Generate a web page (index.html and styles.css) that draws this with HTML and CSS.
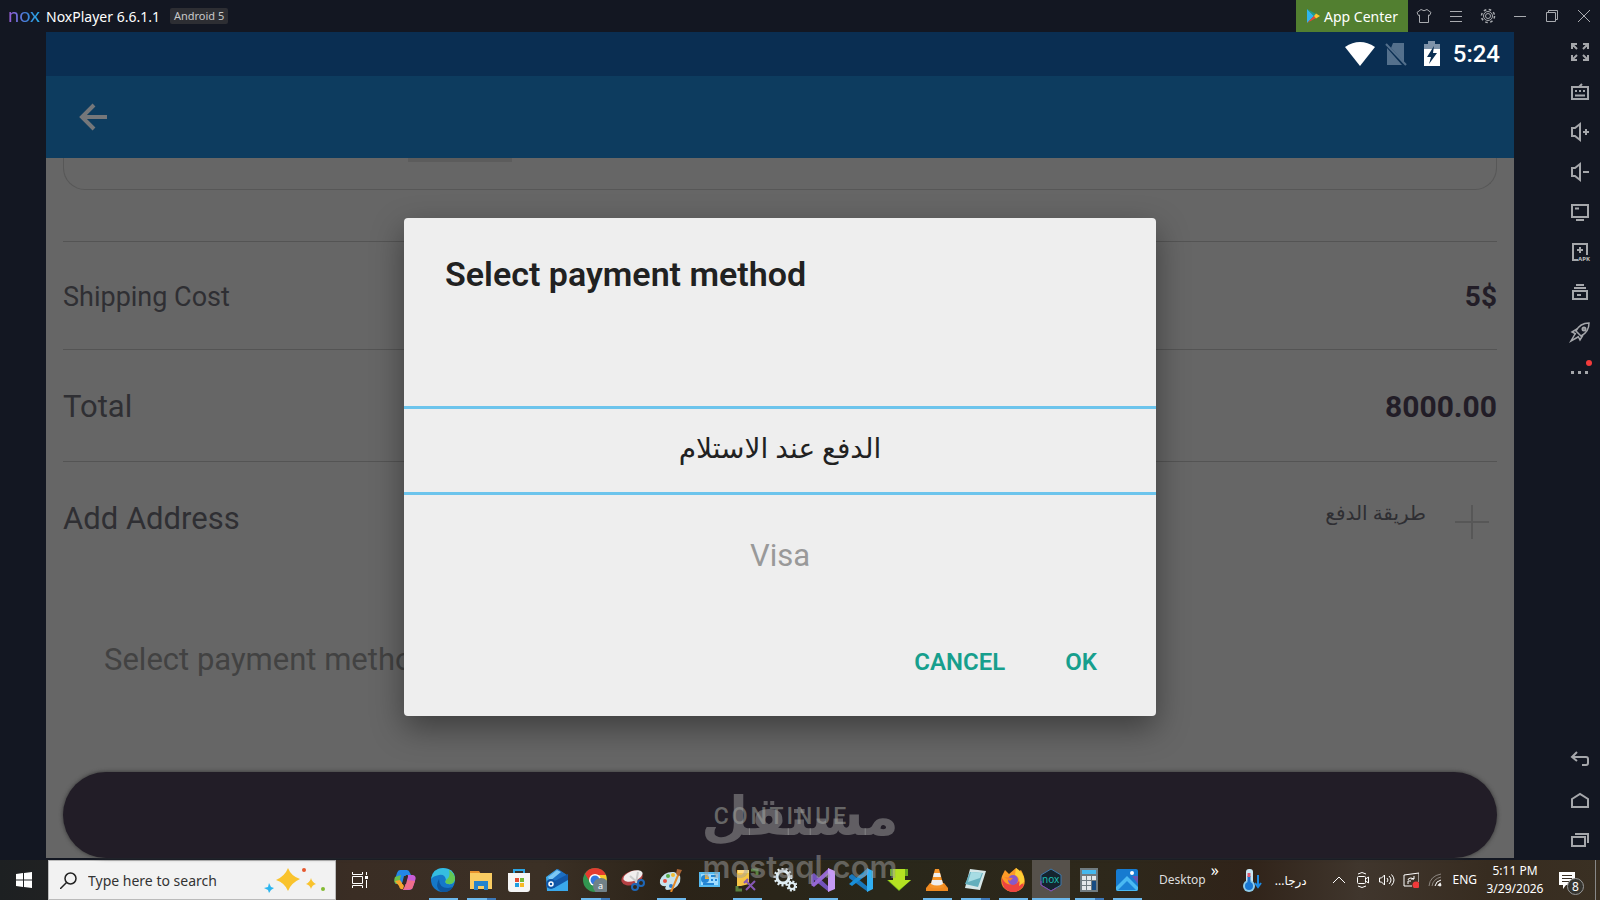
FILE: index.html
```html
<!DOCTYPE html>
<html lang="en">
<head>
    <meta charset="UTF-8">
    <meta name="viewport" content="width=device-width, initial-scale=1.0">
    <title>NoxPlayer 6.6.1.1</title>
    <link rel="stylesheet" href="styles.css">
</head>
<body>
    <!-- Emulator title bar -->
    <header class="titlebar">
        <span class="nox-logo">nox</span>
        <span class="app-name">NoxPlayer 6.6.1.1</span>
        <span class="version-tag">Android 5</span>
        <div class="window-buttons">
            <button class="app-center">
                <svg width="14" height="14" viewBox="0 0 14 14"><path fill="#2fb4f0" d="M1 0v14l7-7z"/><path fill="#1f9e8a" d="M1 0l9 5-2 2z"/><path fill="#e8453c" d="M1 14l9-5-2-2z"/><path fill="#fdc62f" d="M10 4.500l4 2.500-4 2.500L8 7z"/></svg>
                App Center
            </button>
            <button class="win-btn" aria-label="Theme"><svg width="16" height="16" viewBox="0 0 16 16"><path d="M5 1.500Q8 4 11 1.500L15 4.500 13.500 7.500 12.500 7V14.500H3.500V7L2.500 7.500 1 4.500z"/></svg></button>
            <button class="win-btn" aria-label="Menu"><svg width="14" height="14" viewBox="0 0 14 14"><path d="M1 2.500h12M1 7.500h12M1 12.500h12"/></svg></button>
            <button class="win-btn" aria-label="Settings"><svg width="16" height="16" viewBox="0 0 16 16"><circle cx="8" cy="8" r="2.500"/><circle cx="8" cy="8" r="4.500"/><circle cx="8" cy="8" r="6.500" stroke-width="1.500" stroke-dasharray="2.600 2.500"/></svg></button>
            <button class="win-btn" aria-label="Minimize"><svg width="14" height="14" viewBox="0 0 14 14"><path d="M1 7.500h12"/></svg></button>
            <button class="win-btn" aria-label="Restore"><svg width="14" height="14" viewBox="0 0 14 14"><path d="M1.500 3.500h9v9h-9zM3.500 3.500v-2h9v9h-2"/></svg></button>
            <button class="win-btn" aria-label="Close"><svg width="14" height="14" viewBox="0 0 14 14"><path d="M1 1l12 12M13 1L1 13"/></svg></button>
        </div>
    </header>

    <main class="emulator">
        <section class="device">
            <div class="status-bar">
                <svg width="30" height="26" viewBox="0 0 30 26"><path fill="#fff" d="M0 6Q15-4 30 6L15 25z"/></svg>
                <svg class="sim" width="22" height="26" viewBox="0 0 22 26"><path fill="#54708c" d="M8 2h11v19L6 7zM2 7v17h15z"/><path stroke="#54708c" stroke-width="2" d="M1 3l20 21"/></svg>
                <svg class="battery" width="18" height="26" viewBox="0 0 18 26"><path fill="#7f93a9" d="M5 0h7v3h5v6H1V3h4z"/><path fill="#fff" d="M1 8h16v17H1z"/><path fill="#0a2e52" d="M11 5L4 16h4l-2 7 8-11h-4z"/></svg>
                <span class="clock">5:24</span>
            </div>
            <div class="app-bar">
                <button class="back-btn" aria-label="Back"><svg width="28" height="28" viewBox="0 0 28 28"><path fill="none" stroke="#75777a" stroke-width="4" d="M28 14H3M15 2L3 14l12 12"/></svg></button>
            </div>

            <div class="checkout">
                <div class="card-end"><span class="card-chip"></span></div>
                <div class="row shipping">
                    <span class="label">Shipping Cost</span>
                    <strong class="amount">5$</strong>
                </div>
                <div class="row total">
                    <span class="label">Total</span>
                    <strong class="amount">8000.00</strong>
                </div>
                <div class="row address">
                    <span class="label">Add Address</span>
                    <span class="method-ar" lang="ar" dir="rtl">طريقة الدفع</span>
                    <button class="plus-btn" aria-label="Add"><svg width="34" height="34" viewBox="0 0 34 34"><path stroke="#575757" stroke-width="2" d="M0 17h34M17 0v34"/></svg></button>
                </div>
                <button class="method-field">Select payment method</button>
                <button class="continue-btn">CONTINUE</button>
            </div>

            <div class="overlay">
                <div class="dialog" role="dialog" aria-labelledby="dialogTitle">
                    <h1 class="dialog-title" id="dialogTitle">Select payment method</h1>
                    <div class="picker" role="listbox" aria-labelledby="dialogTitle">
                        <button class="option selected" role="option" aria-selected="true" lang="ar" dir="rtl">الدفع عند الاستلام</button>
                        <button class="option" role="option" aria-selected="false">Visa</button>
                    </div>
                    <div class="dialog-actions">
                        <button class="dialog-btn">CANCEL</button>
                        <button class="dialog-btn">OK</button>
                    </div>
                </div>
            </div>
        </section>

        <aside class="toolbar">
            <button class="tool" aria-label="Full screen"><svg viewBox="0 0 18 18"><path d="M1 6V1h5M1 1l5 5M12 1h5v5M17 1l-5 5M1 12v5h5M1 17l5-5M17 12v5h-5M17 17l-5-5"/></svg></button>
            <button class="tool" aria-label="Keyboard"><svg viewBox="0 0 18 18"><path d="M1 4h16v12H1zM4 12.500h10M4 8h2M8 8h2M12 8h2M8 4l3-3"/></svg></button>
            <button class="tool" aria-label="Volume up"><svg viewBox="0 0 18 18"><path d="M1 5h3l5-4v16l-5-4H1zM12 9h6M15 6v6"/></svg></button>
            <button class="tool" aria-label="Volume down"><svg viewBox="0 0 18 18"><path d="M1 5h3l5-4v16l-5-4H1zM12 9h6"/></svg></button>
            <button class="tool" aria-label="Screen"><svg viewBox="0 0 18 18"><path d="M1 2h16v12H1zM5 17h8M4 5.500h4"/></svg></button>
            <button class="tool" aria-label="Install APK"><svg viewBox="0 0 18 18"><path d="M7 17H2V1h14v11M9 4v6M6 7h6"/><text x="7" y="18">APK</text></svg></button>
            <button class="tool" aria-label="Multi-instance"><svg viewBox="0 0 18 18"><path d="M2 8h14v8H2zM3 5h12M5 2h8M6 12h4"/></svg></button>
            <button class="tool" aria-label="Boost"><svg viewBox="0 0 18 18"><path stroke-width="1.500" d="M18 0Q9 0 5 8l5 5Q18 9 18 0zM6 6L1 9l4 2M12 12l-3 5-2-4M4 11L0 18l7-4"/><circle cx="13" cy="6" r="1.500"/></svg></button>
            <button class="tool more" aria-label="More"><svg viewBox="0 0 18 18"><path stroke-width="3" d="M0 9.500h3M7 9.500h3M14 9.500h3"/></svg></button>
            <div class="nav-tools">
                <button class="tool" aria-label="Back"><svg viewBox="0 0 18 18"><path d="M6 1L1 6l5 4M1 6h14q2 0 2 2v4q0 2-2 2h-4"/></svg></button>
                <button class="tool" aria-label="Home"><svg viewBox="0 0 18 18"><path d="M1 8l8-5 8 5v8H1z"/></svg></button>
                <button class="tool" aria-label="Recent apps"><svg viewBox="0 0 18 18"><path d="M1 6h13v9H1zM4 3h13v9"/></svg></button>
            </div>
        </aside>
    </main>

    <!-- Windows taskbar -->
    <footer class="taskbar">
        <button class="start-btn" aria-label="Start"><svg width="16" height="16" viewBox="0 0 16 16"><path fill="#fff" d="M0 2l7-1v6.500H0zM8 1l8-1v7.500H8zM0 8.500h7V15l-7-1zM8 8.500h8V16l-8-1z"/></svg></button>
        <label class="search">
            <svg width="17" height="17" viewBox="0 0 17 17"><path fill="none" stroke="#222" stroke-width="1.500" d="M6.500 10.500L0 17"/><circle cx="10.500" cy="6.500" r="5.500" fill="none" stroke="#222" stroke-width="1.500"/></svg>
            <input class="search-input" type="text" placeholder="Type here to search" aria-label="Search">
            <svg width="62" height="26" viewBox="0 0 62 26"><path fill="#f9c32d" d="M24 1q3 8 12 11-9 4-12 12-3-8-12-11 9-4 12-12zM47 11q1 4 5 6-4 1-5 5-1-4-5-5 4-2 5-6z"/><path fill="#2bb5ef" d="M5 16l2 4 3 1-3 2-2 3-1-3-4-2 4-1z"/><circle cx="40" cy="3" r="2" fill="#e6582e"/><circle cx="59" cy="22" r="2" fill="#83bb32"/></svg>
        </label>
        <button class="task-view" aria-label="Task view"><svg width="16" height="16" viewBox="0 0 16 16"><path fill="none" stroke="#fff" d="M.5 0v2.500h10V0M.5 4.500h10v7H.5zM.5 16v-2.500h10V16M14.500 0v3M14.500 8v8"/><path fill="#fff" d="M13 4h3v3h-3z"/></svg></button>

        <nav class="apps">
            <button class="app" aria-label="Copilot"><svg viewBox="0 0 24 24"><path fill="#2387e8" d="M7 2h7q2 0 3 3l1 2h-5L9 16H4q-3 0-2-5l2-6q1-3 3-3z"/><path fill="#6bc04b" d="M2 9l6-2-2 9H3q-3-2-1-7z"/><path fill="#f5a52c" d="M2 13l5-1 4 6-1 3q-3 1-4-3z"/><path fill="#c75dd7" d="M15 7h5q4 1 2 6l-2 6q-1 3-4 3h-6l2-3z"/><path fill="#ee6e8b" d="M14 12l8 1-3 8-9 1 2-4z"/><path fill="#352a26" d="M11 8h4l-2 8H9z"/></svg></button>
            <button class="app open" aria-label="Edge"><svg viewBox="0 0 24 24"><circle cx="12" cy="12" r="12" fill="#1578c9"/><path fill="#35bde0" d="M0 11Q2 0 12 0q11 0 12 10 0 7-7 6-4-1-2-4-1-6-7-5-6 1-8 4z"/><path fill="#63c953" d="M18 2q6 4 6 9-1 6-7 5-4-1-2-4 5-3 3-10z"/><path fill="#0d569f" d="M8 11q0 9 9 9l5-1q-4 6-11 5-8-4-3-13z"/></svg></button>
            <button class="app open multi" aria-label="File Explorer"><svg viewBox="0 0 24 24"><path fill="#e9942e" d="M1 3h9l2 3H1z"/><path fill="#f9cc62" d="M1 5h22v16H1z"/><path fill="#2583cc" d="M5 13h14v9h-4v-4H9v4H5z"/></svg></button>
            <button class="app" aria-label="Store"><svg viewBox="0 0 24 24"><path fill="none" stroke="#2ba4e3" stroke-width="2" d="M7 7V2h10v5"/><path fill="#f5f5f5" d="M1 5h22v16q0 3-3 3H4q-3 0-3-3z"/><path fill="#e34b32" d="M8 10h4v4H8z"/><path fill="#75b938" d="M13 10h4v4h-4z"/><path fill="#1f9de0" d="M8 15h4v4H8z"/><path fill="#f7b924" d="M13 15h4v4h-4z"/></svg></button>
            <button class="app" aria-label="Mail"><svg viewBox="0 0 24 24"><path fill="#3aa9ec" d="M1 9L12 1l11 7v15H2z"/><path fill="#1c6fc4" d="M4 8l9-7 9 6-13 10z"/><path fill="#7cc8f5" d="M3 9l9-7 4 2-11 9z"/><path fill="#1257a8" d="M23 6v6L9 20l-3-5z"/><circle cx="6" cy="16" r="5" fill="#0e55a5"/><circle cx="6" cy="16" r="2" fill="none" stroke="#fff" stroke-width="1.500"/></svg></button>
            <button class="app open multi" aria-label="Chrome"><svg viewBox="0 0 24 24"><circle cx="12" cy="12" r="12" fill="#329650"/><path fill="#e43b2f" d="M2 6Q5 0 12 0q8 0 11 7H12l-5 7z"/><path fill="#fac92c" d="M12 7h11q3 10-6 16l-5-3 5-8z"/><circle cx="12" cy="12" r="6" fill="#fff"/><circle cx="12" cy="12" r="4.500" fill="#3376df"/><circle cx="18" cy="18" r="8" fill="#718188"/><text x="15" y="21" font-size="9" fill="#fff">a</text></svg></button>
            <button class="app" aria-label="Snipping Tool"><svg viewBox="0 0 24 24"><ellipse cx="11" cy="10" rx="11" ry="7" fill="#b44043" transform="rotate(-20 11 10)"/><ellipse cx="12" cy="8" rx="10" ry="5" fill="#f1eeee" transform="rotate(-20 12 8)"/><path stroke="#ccc" stroke-width="2" d="M9 8l8 7M17 4l-2 11"/><g fill="none" stroke="#1e67b7" stroke-width="2"><circle cx="14" cy="19" r="3"/><circle cx="20" cy="15" r="3"/></g></svg></button>
            <button class="app open" aria-label="Paint"><svg viewBox="0 0 24 24"><path fill="#c7e3ee" d="M1 12Q5 3 15 4q8 2 6 10-4 8-13 8-3-1-1-4-7 1-6-6z"/><circle cx="6" cy="13" r="2" fill="#e64e3d"/><circle cx="9" cy="8" r="2" fill="#58ad47"/><circle cx="14" cy="7" r="2" fill="#f2bd34"/><circle cx="12" cy="18" r="2" fill="#2879c9"/><path stroke="#e58a28" stroke-width="2" d="M12 24l8-19"/><path fill="#ac6434" d="M18 1l5 1-3 6-3-2z"/></svg></button>
            <button class="app" aria-label="Control Panel"><svg viewBox="0 0 24 24"><path fill="#55baf0" d="M2 4h21v15H2z"/><path fill="#9fdcff" d="M4 6h17v11H4z"/><circle cx="8" cy="11" r="4" fill="#2385d5"/><path fill="#f4b32f" d="M8 11V7q4 0 4 4z"/><path stroke="#2385d5" stroke-width="2" d="M14 8h5M14 12h2M18 12h2M6 16h11"/></svg></button>
            <button class="app open" aria-label="SQL Server"><svg viewBox="0 0 24 24"><path fill="#f6c445" d="M2 2h12v14l-8 2H2z"/><path fill="#ffde82" d="M3 2h11v3H3z"/><path fill="none" stroke="#598140" stroke-width="3" d="M16 2h6v5M2 18v4h5"/><path stroke="#8658b5" stroke-width="2" d="M11 13l9 9M20 13l-9 9M9 15l4-4"/></svg></button>
            <button class="app" aria-label="Services"><svg viewBox="0 0 24 24"><g fill="none" stroke="#e0edf3"><circle cx="10" cy="9" r="6" stroke-width="3"/><circle cx="10" cy="9" r="8" stroke-width="3" stroke-dasharray="2 2"/><circle cx="19" cy="18" r="3" stroke-width="2"/><circle cx="19" cy="18" r="4.500" stroke-width="2" stroke-dasharray="2 1.500"/></g></svg></button>
            <button class="app open" aria-label="Visual Studio"><svg viewBox="0 0 24 24"><path fill="#7253bb" d="M0 7l3-2 15 14v5L3 12v6l-3-2z"/><path fill="#9667d4" d="M3 19l15-13V0L0 17z"/><path fill="#c69af5" d="M17 0l7 3v18l-7 3z"/></svg></button>
            <button class="app" aria-label="VS Code"><svg viewBox="0 0 24 24"><path fill="#1978bd" d="M0 8l3-2 16 13v5L0 10z"/><path fill="#198fd9" d="M0 16l3 2L19 6V0z"/><path fill="#31aff2" d="M18 0l6 3v18l-6 3z"/></svg></button>
            <button class="app" aria-label="Downloader"><svg viewBox="0 0 24 24"><path fill="#69a81d" d="M3 1h5v6h8V1h5v7h-3v4h6L12 23 0 12h6V8H3z"/><path fill="#b4e222" d="M6 1h12v11h6L12 22 1 12h5z"/></svg></button>
            <button class="app open" aria-label="VLC"><svg viewBox="0 0 24 24"><path fill="#f08a20" d="M5 15h14l4 5v3H1v-3z"/><path fill="#f59428" d="M10 1h4l5 18q-7 3-14 0z"/><path fill="#eee" d="M9 5h6l1 4H8zM7 12h10l1 4q-6 3-12 0z"/></svg></button>
            <button class="app open multi" aria-label="Notepad"><svg viewBox="0 0 24 24"><path fill="#d6e7e8" d="M7 1l16 2-6 19-15-2z"/><path fill="#63afbd" d="M7 4l13 1-5 14-13-3z"/><path fill="#a7dce3" d="M8 4l11 1-2 5-12 4z"/></svg></button>
            <button class="app open" aria-label="Firefox"><svg viewBox="0 0 24 24"><path fill="#fc9a27" d="M1 8l3-6 4 4 7-6 2 4 3-2q8 14-1 20-10 5-17-3-3-5-1-11z"/><path fill="#ed4440" d="M1 10q4 8 10 6 6 0 7-3l5 4q-5 8-13 7Q0 21 1 10z"/><path fill="#fdcf35" d="M15 0q9 5 8 14l-5 4q2-8-4-11z"/><circle cx="12" cy="12" r="5" fill="#8959c8"/><path fill="#fa7f31" d="M3 9l9 1-3 3z"/></svg></button>
            <button class="app open active" aria-label="NoxPlayer"><svg viewBox="0 0 24 24"><path fill="#14242f" stroke="#3d79ac" d="M12 1l10 6v10l-10 6-10-6V7z"/><path fill="none" stroke="#9145ae" d="M2 13v4l10 6 5-3"/><text x="3" y="15" font-size="10" fill="#1dbdb0">nox</text></svg></button>
            <button class="app open multi" aria-label="Calculator"><svg viewBox="0 0 24 24"><path fill="#707b80" d="M3 0h18v24H3z"/><path fill="#45b8ee" d="M5 2h14v4H5z"/><path fill="#e3e7e9" d="M5 8h4v4H5zM10 8h4v4h-4zM15 8h4v4h-4zM5 13h4v4H5zM10 13h4v4h-4zM5 18h4v4H5zM10 18h4v4h-4z"/><path fill="#174c83" d="M15 13h4v9h-4z"/></svg></button>
            <button class="app open" aria-label="Photos"><svg viewBox="0 0 24 24"><rect x="1" y="1" width="22" height="22" rx="2" fill="#167bd0"/><path fill="#6657b3" d="M17 8h6v8z"/><path fill="#4ab9f2" d="M1 19L12 8l11 11v2q0 2-2 2H3q-2 0-2-2z"/><path fill="#1b82d6" d="M3 22l9-9 9 9z"/><circle cx="17" cy="5" r="2" fill="#fff"/></svg></button>
        </nav>

        <span class="desktop-label">Desktop</span>
        <button class="chevrons" aria-label="Show more">»</button>
        <div class="weather">
            <svg width="20" height="24" viewBox="0 0 20 24"><rect x="3" y="1" width="7" height="18" rx="3" fill="#c9e7f4"/><circle cx="6" cy="18" r="6" fill="#8ecbea"/><path stroke="#1d72cd" stroke-width="3" d="M6 8v8"/><circle cx="6" cy="18" r="4" fill="#1977d2"/><path stroke="#df5871" stroke-width="3" d="M6 5v4"/><path fill="none" stroke="#1d8be4" stroke-width="2" d="M15 7v11M12 15l3 4 3-4"/></svg>
            <span lang="ar" dir="rtl">درجا...</span>
        </div>
        <div class="tray">
            <button class="tray-btn" aria-label="Hidden icons"><svg viewBox="0 0 16 16"><path d="M2 11l6-6 6 6"/></svg></button>
            <button class="tray-btn" aria-label="Meet now"><svg viewBox="0 0 16 16"><path d="M2.500 5.500q0-1 1-1h6q1 0 1 1v5q0 1-1 1h-6q-1 0-1-1zM10.500 7l3-2v6l-3-2M3 2q4-3 8 0M3 14q4 3 8 0"/></svg></button>
            <button class="tray-btn" aria-label="Volume"><svg viewBox="0 0 16 16"><path d="M.5 6v4h2l3 3V3l-3 3zM8 6q2 2 0 4M10 4q4 4 0 8M12.500 2.500q5 5.500 0 11"/></svg></button>
            <button class="tray-btn" aria-label="Update"><svg viewBox="0 0 16 16"><path d="M9 14H1V3l15-2v9M5 8q0-2 3-2l3 1M11 4v3H8M5 12V9h3"/><circle cx="13" cy="13" r="3.500" fill="#f03a3a" stroke="none"/></svg></button>
            <button class="tray-btn" aria-label="Network"><svg viewBox="0 0 16 16"><path stroke="#8d8781" d="M2 14Q3 4 14 2M5 14Q6 7 14 5"/><path d="M8 14q1-5 6-6M11 14q0-2 3-3"/><circle cx="13" cy="13" r="1" fill="#fff"/></svg></button>
        </div>
        <span class="lang">ENG</span>
        <div class="date-time">
            <span>5:11 PM</span>
            <span>3/29/2026</span>
        </div>
        <button class="notifications" aria-label="Notifications">
            <svg width="16" height="17" viewBox="0 0 16 17"><path fill="#fff" d="M0 0h16v13H7l-3 4v-4H0z"/><path stroke="#3a3025" d="M3 3.500h10M3 6.500h10M3 9.500h7"/></svg>
            <span class="badge">8</span>
        </button>
        <button class="show-desktop" aria-label="Show desktop"></button>
    </footer>

    <div class="watermark">
        <span class="watermark-ar" lang="ar" dir="rtl">مستقل</span>
        <span class="watermark-en">mostaql.com</span>
    </div>
</body>
</html>
```
FILE: styles.css
```css
* {
    margin: 0;
    padding: 0;
    box-sizing: border-box;
}

body {
    position: relative;
    display: flex;
    flex-direction: column;
    min-height: 100vh;
    background: #131722;
    font-family: "Noto Sans", "DejaVu Sans", sans-serif;
    font-size: 12px;
    color: #fff;
    overflow: hidden;
}

button {
    background: none;
    border: none;
    color: inherit;
    font: inherit;
    cursor: pointer;
}

svg {
    display: block;
    flex-shrink: 0;
}

/* Title bar */
.titlebar {
    display: flex;
    align-items: center;
    height: 32px;
    padding-left: 8px;
}

.nox-logo {
    width: 38px;
    margin-top: -5px;
    font-family: Lato, sans-serif;
    font-size: 20px;
    line-height: 20px;
    background: linear-gradient(90deg, #9d5bd8, #3d82d8 50%, #1fc4f5);
    -webkit-background-clip: text;
    background-clip: text;
    color: transparent;
}

.app-name {
    font-size: 14px;
}

.version-tag {
    margin-left: 10px;
    padding: 0 4px;
    background: #2d2e33;
    border-radius: 2px;
    font-size: 11px;
    line-height: 16px;
    color: #c8c8c8;
}

.window-buttons {
    display: flex;
    margin-left: auto;
}

.app-center {
    display: flex;
    align-items: center;
    gap: 4px;
    width: 112px;
    height: 32px;
    padding-left: 10px;
    background: #527f30;
    font-size: 14px;
    white-space: nowrap;
}

.win-btn {
    display: flex;
    align-items: center;
    justify-content: center;
    width: 32px;
    height: 32px;
}

.win-btn svg {
    fill: none;
    stroke: #a9abb0;
}

/* Emulator */
.emulator {
    display: flex;
    flex: 1;
    padding-left: 46px;
}

.device {
    position: relative;
    display: flex;
    flex-direction: column;
    flex: 1;
    margin-bottom: 2px;
    background: #666;
    font-family: Roboto, "DejaVu Sans", sans-serif;
}

.status-bar {
    display: flex;
    align-items: center;
    justify-content: flex-end;
    height: 44px;
    padding-right: 14px;
    background: #0a2e52;
}

.sim {
    margin-left: 10px;
}

.battery {
    margin: 0 12px 0 16px;
}

.clock {
    font-size: 24px;
    font-weight: 500;
}

.app-bar {
    display: flex;
    align-items: center;
    height: 82px;
    padding-left: 33px;
    background: #0d3c5f;
}

.checkout {
    display: flex;
    flex-direction: column;
    flex: 1;
    padding: 0 17px;
    color: #2f2f33;
}

.card-end {
    height: 32px;
    margin-bottom: 51px;
    border: 1px solid #575757;
    border-top: none;
    border-radius: 0 0 22px 22px;
}

.card-chip {
    display: block;
    width: 104px;
    height: 4px;
    margin-left: 344px;
    background: #5c5c5c;
}

.row {
    display: flex;
    align-items: center;
    justify-content: space-between;
    padding-top: 2px;
    border-top: 1px solid #545454;
    font-size: 31px;
}

.shipping {
    height: 108px;
    font-size: 27px;
}

.total {
    height: 112px;
}

.address {
    height: 112px;
}

.amount {
    color: #221d27;
    font-size: 30px;
    font-weight: 700;
}

.shipping .amount {
    font-size: 28px;
}

.method-ar {
    margin: 0 29px 12px auto;
    font-size: 20px;
}

.plus-btn {
    margin: 6px 8px 0 0;
}

.method-field {
    height: 80px;
    margin: 46px 0 30px;
    padding-left: 41px;
    text-align: left;
    font-size: 31px;
    color: #424242;
}

.continue-btn {
    height: 86px;
    margin-top: auto;
    padding: 3px 0 0 3px;
    border-radius: 43px;
    background: #221d27;
    box-shadow: 0 0 4px #333;
    color: #666;
    font-size: 23px;
    font-weight: 500;
    letter-spacing: 3px;
}

/* Payment method dialog */
.overlay {
    position: absolute;
    inset: 44px 0 0;
    display: flex;
    align-items: center;
    justify-content: center;
}

.dialog {
    width: 752px;
    max-width: 90%;
    background: #eee;
    border-radius: 4px;
    box-shadow: 0 12px 32px rgba(0, 0, 0, 0.4);
    color: #212121;
}

.dialog-title {
    padding: 36px 41px 0;
    font-size: 34px;
    line-height: 40px;
    font-weight: 600;
}

.picker {
    display: flex;
    flex-direction: column;
    padding-top: 112px;
}

.option {
    height: 120px;
    font-size: 31px;
    color: #999;
}

.option.selected {
    height: 89px;
    padding-bottom: 4px;
    border-top: 3px solid #6cc4ec;
    border-bottom: 3px solid #6cc4ec;
    font-size: 28px;
    color: #212121;
}

.dialog-actions {
    display: flex;
    justify-content: flex-end;
    gap: 30px;
    padding: 23px 44px 30px;
}

.dialog-btn {
    height: 48px;
    padding: 0 15px;
    color: #179f8d;
    font-size: 24px;
    font-weight: 600;
}

/* Right tool strip */
.toolbar {
    display: flex;
    flex-direction: column;
    width: 86px;
    padding-left: 46px;
}

.tool {
    position: relative;
    display: flex;
    align-items: center;
    justify-content: center;
    width: 40px;
    height: 40px;
}

.tool svg {
    width: 18px;
    height: 18px;
    fill: none;
    stroke: #a5a7ab;
    stroke-width: 2;
    overflow: visible;
}

.tool text {
    fill: #c0c0c0;
    stroke: none;
    font-size: 6px;
    font-weight: 700;
}

.more::after {
    content: "";
    position: absolute;
    top: 8px;
    right: 8px;
    width: 6px;
    height: 6px;
    border-radius: 50%;
    background: #f33b3b;
}

.nav-tools {
    margin-top: auto;
}

/* Taskbar */
.taskbar {
    display: flex;
    align-items: center;
    height: 40px;
    background: linear-gradient(90deg, #1d2022 0, #202122 3%, #3a2d24 22%, #3b3025 34%, #2b2318 42%, #29271a 55%, #2e281b 70%, #302319 78%, #40362d 85%, #372c20 93%, #3a3023 100%);
}

.start-btn,
.task-view {
    display: flex;
    align-items: center;
    justify-content: center;
    width: 48px;
    height: 40px;
}

.search {
    display: flex;
    align-items: center;
    width: 288px;
    height: 40px;
    padding: 0 9px 0 11px;
    background: #f2f2f2;
    border: 1px solid #bbb;
}

.search-input {
    flex: 1;
    min-width: 0;
    margin-left: 11px;
    border: none;
    outline: none;
    background: none;
    font: inherit;
    font-size: 14px;
}

.search-input::placeholder {
    color: #333;
}

.apps {
    display: flex;
    margin-left: 2px;
}

.app {
    position: relative;
    display: flex;
    align-items: center;
    justify-content: center;
    width: 38px;
    height: 40px;
}

.app svg {
    width: 24px;
    height: 24px;
}

.app.open::after {
    content: "";
    position: absolute;
    left: 5px;
    right: 4px;
    bottom: 0;
    height: 2px;
    background: #6cb8ec;
}

.app.multi::after {
    background: linear-gradient(90deg, #6cb8ec 70%, #3c78b8 70%);
}

.app.active {
    background: #56514b;
}

.app.active::after {
    left: 0;
    right: 0;
}

.desktop-label {
    margin: 0 0 2px 13px;
    color: #ddd;
}

.chevrons {
    margin: 0 0 20px 5px;
    font-size: 16px;
    line-height: 16px;
}

.weather {
    display: flex;
    align-items: center;
    gap: 12px;
    margin: 0 auto 0 24px;
}

.tray {
    display: flex;
}

.tray-btn {
    display: flex;
    align-items: center;
    justify-content: center;
    width: 24px;
    height: 40px;
}

.tray-btn svg {
    width: 16px;
    height: 16px;
    fill: none;
    stroke: #fff;
}

.lang {
    margin: 0 0 2px 5px;
}

.date-time {
    display: flex;
    flex-direction: column;
    align-items: center;
    width: 76px;
    line-height: 18px;
}

.notifications {
    position: relative;
    width: 42px;
    height: 40px;
    padding-left: 6px;
}

.badge {
    position: absolute;
    left: 14px;
    top: 18px;
    width: 17px;
    height: 17px;
    border: 1px solid #999;
    border-radius: 50%;
    background: #35342f;
    line-height: 15px;
}

.show-desktop {
    width: 5px;
    height: 40px;
    border-left: 1px solid #888;
}

/* Watermark over the bottom of the screen */
.watermark {
    position: absolute;
    left: 0;
    right: 0;
    bottom: 12px;
    display: flex;
    flex-direction: column;
    align-items: center;
    color: rgba(160, 160, 160, 0.5);
    font-weight: 700;
    pointer-events: none;
}

.watermark-ar {
    font-family: "DejaVu Sans", sans-serif;
    font-size: 54px;
    line-height: 58px;
}

.watermark-en {
    font-family: Inter, sans-serif;
    font-size: 31px;
    line-height: 42px;
    font-weight: 600;
}
```
